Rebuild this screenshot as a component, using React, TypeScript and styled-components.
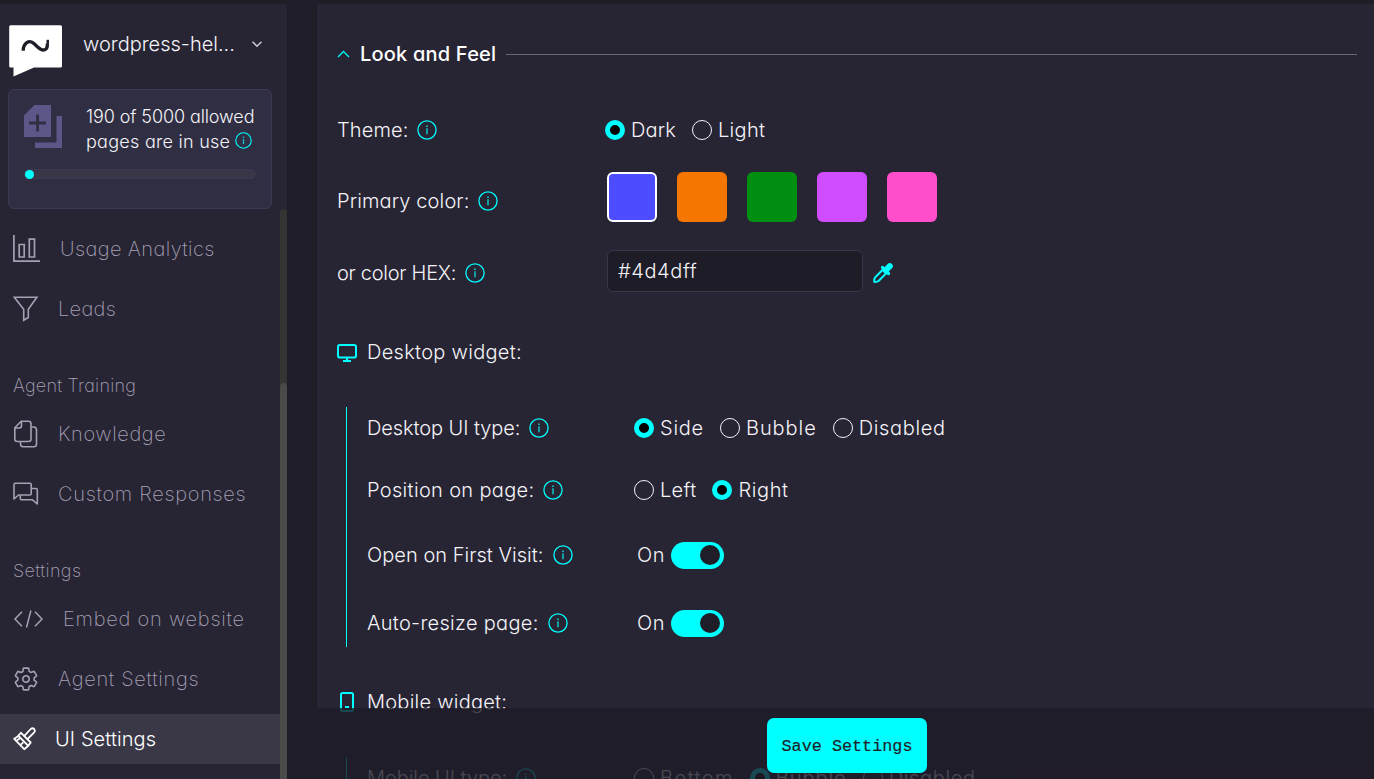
import {useState} from 'react'
import styled, {createGlobalStyle} from 'styled-components'
import {IoSettingsOutline} from 'react-icons/io5'

const colors = {
  page: '#1f1d27',
  panel: '#272433',
  accent: '#00ffff',
  muted: '#a5a0b5',
}

const swatches = ['#4d4dff', '#f57600', '#008f11', '#d04dff', '#ff4dcb']

export default function App() {
  const [color, setColor] = useState('#4d4dff')

  return (
    <>
      <GlobalStyle/>
      <Page>
        <Sidebar>
          <Account>
            <Logo/>
            <AccountName>wordpress-hel...</AccountName>
            <ChevronDown/>
          </Account>
          <UsageCard>
            <UsageTop>
              <PagesIcon/>
              <UsageText>
                <UsageLine $ls={-.1}>190 of 5000 allowed</UsageLine>
                <UsageLine $ls={.27}>pages are in use <Info size={17}/></UsageLine>
              </UsageText>
            </UsageTop>
            <Progress><ProgressFill/></Progress>
          </UsageCard>
          <NavScroll>
            <Nav>
              <NavItem $gap={19} $ls={.4}><ChartIcon/>Usage Analytics</NavItem>
              <NavItem $gap={19} $ls={.3}><FilterIcon/>Leads</NavItem>
              <NavTitle $ls={.25}>Agent Training</NavTitle>
              <NavItem $gap={19} $ls={.6}><FilesIcon/>Knowledge</NavItem>
              <NavItem $gap={19} $ls={.7}><ChatsIcon/>Custom Responses</NavItem>
              <NavTitle $ls={.4}>Settings</NavTitle>
              <NavItem $gap={19} $ls={.76}><CodeIcon/>Embed on website</NavItem>
              <NavItem $gap={19} $ls={.7}><IoSettingsOutline size={26}/>Agent Settings</NavItem>
              <NavItem $gap={18} $ls={.1} $active><BrushIcon/>UI Settings</NavItem>
            </Nav>
            <ScrollTrack><ScrollThumb/></ScrollTrack>
          </NavScroll>
        </Sidebar>

        <Main>
          <SectionHead>
            <ChevronUp/>
            <h2>Look and Feel</h2>
            <Rule/>
          </SectionHead>

          <Row $h={50} $mb={17}>
            <Label $ls={.1}>Theme: <Info/></Label>
            <Radios $shift={-2}>
              <Radio on ls={.15}>Dark</Radio>
              <Radio ls={.3}>Light</Radio>
            </Radios>
          </Row>
          <Row $h={50} $mb={28}>
            <Label $ls={.12} $drop={4}>Primary color: <Info/></Label>
            <Swatches>
              {swatches.map((s) => (
                <Swatch key={s} $color={s} $selected={s === color} onClick={() => setColor(s)}/>
              ))}
            </Swatches>
          </Row>
          <Row $h={42} $mb={45}>
            <Label $ls={-.27} $drop={2}>or color HEX: <Info/></Label>
            <HexInput value={color} onChange={(e) => setColor(e.target.value)}/>
            <Eyedropper/>
          </Row>

          <WidgetTitle $ls={.3}><DesktopIcon/>Desktop widget:</WidgetTitle>
          <Group>
            <Row $h={42} $mb={20}>
              <Label $ls={-.08}>Desktop UI type: <Info/></Label>
              <Radios $shift={-3}>
                <Radio on ls={.75}>Side</Radio>
                <Radio ls={.95}>Bubble</Radio>
                <Radio ls={.65}>Disabled</Radio>
              </Radios>
            </Row>
            <Row $h={42} $mb={23}>
              <Label $ls={.33}>Position on page: <Info/></Label>
              <Radios $shift={-3}>
                <Radio ls={.3}>Left</Radio>
                <Radio on ls={.6}>Right</Radio>
              </Radios>
            </Row>
            <Row $h={42} $mb={26}>
              <Label $ls={.04}>Open on First Visit: <Info/></Label>
              <Toggle/>
            </Row>
            <Row $h={42} $mb={3}>
              <Label $ls={.3}>Auto-resize page: <Info/></Label>
              <Toggle/>
            </Row>
          </Group>

          <WidgetTitle $ls={.25}><MobileIcon/>Mobile widget:</WidgetTitle>
          <Group>
            <Row $h={42} $mb={20}>
              <Label $ls={-.05}>Mobile UI type: <Info/></Label>
              <Radios $shift={-3}>
                <Radio ls={1.4}>Bottom</Radio>
                <Radio on ls={.95}>Bubble</Radio>
                <Radio ls={.65}>Disabled</Radio>
              </Radios>
            </Row>
          </Group>

          <Footer>
            <SaveButton>Save Settings</SaveButton>
          </Footer>
        </Main>
      </Page>
    </>
  )
}

function Radio({children, on = false, ls}: {children: string, on?: boolean, ls: number}) {
  return <RadioLabel $ls={ls}><RadioDot $on={on}/>{children}</RadioLabel>
}

function Toggle() {
  return <ToggleWrap>On<Switch><Knob/></Switch></ToggleWrap>
}

function Info({size = 20}: {size?: number}) {
  return (
    <InfoSvg width={size} height={size} viewBox='0 0 20 20' fill='none' stroke={colors.accent}>
      <circle cx='10' cy='10' r='9.1' strokeWidth='1.3'/>
      <path d='M10 8.2V14.3' strokeWidth='1.5' opacity='.75'/>
      <path d='M10 5.4V6.9' strokeWidth='1.7' opacity='.75'/>
    </InfoSvg>
  )
}

function Logo() {
  return (
    <svg width='54' height='53' viewBox='0 0 54 53'>
      <path d='M1.500 .3H51.500Q53 .3 53 1.800V41Q53 42.500 51.500 42.500H25L4.500 51.500V42.500H1.500Q.2 42.500 .2 41V1.800Q.2 .3 1.500 .3Z' fill='#fff'/>
      <path d='M14.200 25.800C14.200 18.500 20 13.500 25.500 19C31 24.500 34 26.500 37 24C38.500 22.800 38.400 21 38.400 18.200' fill='none' stroke='#1f1d27' strokeWidth='3.300'/>
      <path d='M37.500 14.800H40V18.500H37.500Z' fill='#1f1d27'/>
    </svg>
  )
}

function ChevronDown() {
  return (
    <svg width='12' height='8' viewBox='0 0 12 8' fill='none' stroke='#c9c6d2' strokeWidth='1.6'>
      <path d='M1.500 1.700L6 6.200L10.500 1.700'/>
    </svg>
  )
}

function ChevronUp() {
  return (
    <svg width='13' height='8' viewBox='0 0 13 8' fill='none' stroke={colors.accent} strokeWidth='1.3'>
      <path d='M1 7L6.500 1.500L12 7'/>
    </svg>
  )
}

function PagesIcon() {
  return (
    <svg width='38' height='43' viewBox='0 0 38 43' fill='#5c5788'>
      <path fillRule='evenodd' d='M10.500 0H27V32H0V10.500ZM12.200 9.500V16.600H5V19.400H12.200V26.500H15V19.400H22V16.600H15V9.500Z'/>
      <path d='M32.500 11H38V43H11V37.500H32.500Z'/>
    </svg>
  )
}

function ChartIcon() {
  return (
    <svg width='28' height='30' viewBox='0 0 28 30' fill='none' stroke='currentColor' strokeWidth='1.7'>
      <path d='M.9 1V27.200H27M6.200 10.500H11.200V23H6.200ZM16.300 5.200H21.500V23H16.300Z'/>
    </svg>
  )
}

function FilterIcon() {
  return (
    <svg width='26' height='26' viewBox='0 0 26 26' fill='none' stroke='currentColor' strokeWidth='1.6'>
      <path d='M1.300 1.300H23.900L15.300 13.300V21.500L10.700 24.300V13.300Z'/>
    </svg>
  )
}

function FilesIcon() {
  return (
    <svg width='26' height='28' viewBox='0 0 26 28' fill='none' stroke='currentColor' strokeWidth='1.6' strokeLinejoin='round'>
      <path d='M8.200 1.300H15.500Q18 1.300 18 3.800V19Q18 21.500 15.500 21.500H4.300Q1.800 21.500 1.800 19V7.700ZM8.500 1.500V5.800Q8.500 8 6.300 8H2'/>
      <path d='M18.200 7H20.700Q23.500 7 23.500 9.800V24Q23.500 26.800 20.700 26.800H10.300Q7.500 26.800 7.500 24V21.800'/>
    </svg>
  )
}

function ChatsIcon() {
  return (
    <svg width='26' height='24' viewBox='0 0 26 24' fill='none' stroke='currentColor' strokeWidth='1.6' strokeLinejoin='round'>
      <path d='M1 17V2.500Q1 1.300 2.200 1.300H17Q18.200 1.300 18.200 2.500V11.800Q18.200 13 17 13H5.500Z'/>
      <path d='M18.500 6.500H23Q24.300 6.500 24.300 7.800V22L19.500 17.800H8.500Q7.300 17.800 7.300 16.600V13.500'/>
    </svg>
  )
}

function CodeIcon() {
  return (
    <svg width='31' height='18' viewBox='0 0 31 18' fill='none' stroke='currentColor' strokeWidth='1.5'>
      <path d='M9 1.800L2 9L9 16.200M17.900 .5L13.500 17.500M22 1.800L29 9L22 16.200'/>
    </svg>
  )
}

function BrushIcon() {
  return (
    <svg width='24' height='26' viewBox='0 0 24 26' fill='none' stroke='currentColor' strokeWidth='1.8' strokeLinejoin='round'>
      <path d='M8 6.800L17.700 16.500Q15.500 20.300 11.200 23.200L1.200 12.900Q5 10.800 8 6.800Z'/>
      <path d='M5.500 10L14.800 19.400M3.700 14.500L6.700 12.500M7.800 18.600L10.300 16.300'/>
      <path d='M11.300 9.800L17.800 3Q19.500 1.600 21.200 3Q22.600 4.700 21.200 6.400L14.600 13'/>
    </svg>
  )
}

function Eyedropper() {
  return (
    <EyedropperSvg width='20' height='20' viewBox='0 0 20 20' fill='none' stroke={colors.accent} strokeLinecap='round' strokeLinejoin='round'>
      <path d='M10.200 6.300L2.300 14.200Q.8 16 1.200 18.800Q4 19.200 5.800 17.700L13.700 9.800' strokeWidth='2'/>
      <path d='M9.500 4.500L15.500 10.500' strokeWidth='3.200'/>
      <path d='M12.700 7.300L16.800 3.200' strokeWidth='6'/>
    </EyedropperSvg>
  )
}

function DesktopIcon() {
  return (
    <DesktopSvg width='20' height='18' viewBox='0 0 20 18' fill='none' stroke={colors.accent} strokeWidth='2'>
      <rect x='1' y='1' width='18' height='12.600' rx='1.800'/>
      <path d='M10 13.500V16.500M6 17H14'/>
    </DesktopSvg>
  )
}

function MobileIcon() {
  return (
    <MobileSvg width='14' height='20' viewBox='0 0 14 20' fill='none' stroke={colors.accent} strokeWidth='2'>
      <rect x='1' y='1' width='12' height='18' rx='1.800'/>
      <path d='M5 15H9'/>
    </MobileSvg>
  )
}

const GlobalStyle = createGlobalStyle`
  *{
    box-sizing: border-box;
  }
  body{
    margin: 0;
    background: ${colors.page};
    color: #f4f3f8;
    font-family: Inter, sans-serif;
    font-size: 20px;
    font-weight: 290;
    font-feature-settings: "cv11";
  }
  svg{
    flex: none;
  }
`

const Page = styled.div`
  display: flex;
  gap: 30px;
  height: 779px;
  padding-top: 4px;
  overflow: hidden;
`

const Sidebar = styled.aside`
  display: flex;
  flex-direction: column;
  flex: none;
  width: 287px;
  background: ${colors.panel};
`

const Account = styled.div`
  display: flex;
  flex: none;
  height: 85px;
  padding: 21px 0 0 9px;

  svg:last-child{
    margin: 15px 0 0 15px;
  }
`

const AccountName = styled.div`
  width: 153px;
  margin: 5px 0 0 20px;
  line-height: 28px;
  white-space: nowrap;
`

const UsageCard = styled.div`
  flex: none;
  width: 264px;
  height: 120px;
  margin-left: 8px;
  padding: 15px;
  background: #302e42;
  border: 1px solid #3c3954;
  border-radius: 6px;
`

const UsageTop = styled.div`
  display: flex;
  gap: 24px;
`

const UsageText = styled.div`
  margin-top: -1px;
  white-space: nowrap;
`

const UsageLine = styled.div<{$ls: number}>`
  height: 25px;
  font-size: 18px;
  line-height: 25px;
  letter-spacing: ${p => p.$ls}px;

  svg{
    margin-left: -1px;
    vertical-align: -1px;
  }
`

const Progress = styled.div`
  height: 10px;
  margin: 15px 0 0;
  background: #393747;
  border: 1px solid #3c3954;
  border-radius: 5px;
`

const ProgressFill = styled.div`
  width: 9px;
  height: 9px;
  margin-top: -.5px;
  background: ${colors.accent};
  border-radius: 50%;
`

const NavScroll = styled.div`
  display: flex;
  flex: 1;
`

const Nav = styled.nav`
  width: 280px;
  padding-top: 15px;
`

const NavItem = styled.div<{$gap: number, $ls: number, $active?: boolean}>`
  display: flex;
  align-items: center;
  gap: ${p => p.$gap}px;
  height: 50px;
  margin-bottom: 10px;
  padding-left: 13px;
  color: ${p => p.$active ? '#fff' : colors.muted};
  background: ${p => p.$active ? '#3a3847' : 'transparent'};
  font-weight: ${p => p.$active ? 300 : 210};
  letter-spacing: ${p => p.$ls}px;
`

const NavTitle = styled.div<{$ls: number}>`
  height: 50px;
  margin-top: 25px;
  padding-left: 13px;
  color: ${colors.muted};
  font-size: 18px;
  font-weight: 210;
  line-height: 54px;
  letter-spacing: ${p => p.$ls}px;
`

const ScrollTrack = styled.div`
  width: 7px;
  padding-top: 174px;
  background: #343434;
  border-radius: 4px 4px 0 0;
`

const ScrollThumb = styled.div`
  height: 396px;
  background: #4a4a4a;
  border-radius: 4px 4px 0 0;
`

const Main = styled.main`
  position: relative;
  flex: 1;
  padding: 30px 17px 0 20px;
  background: ${colors.panel};
`

const SectionHead = styled.div`
  display: flex;
  align-items: center;
  gap: 10px;
  height: 40px;
  margin-bottom: 31px;

  h2{
    margin: 0;
    color: #fff;
    font-size: 20px;
    font-weight: 500;
    letter-spacing: .2px;
  }
`

const Rule = styled.div`
  flex: 1;
  height: 1px;
  background: #6a6678;
`

const Row = styled.div<{$h: number, $mb: number}>`
  display: flex;
  align-items: center;
  height: ${p => p.$h}px;
  margin-bottom: ${p => p.$mb}px;
`

const Label = styled.div<{$ls: number, $drop?: number}>`
  display: flex;
  align-items: center;
  gap: 9px;
  width: 270px;
  padding-top: ${p => (p.$drop || 0) * 2}px;
  letter-spacing: ${p => p.$ls}px;
  white-space: nowrap;
`

const InfoSvg = styled.svg`
  overflow: visible;
`

const Radios = styled.div<{$shift: number}>`
  display: flex;
  gap: 16px;
  margin-left: ${p => p.$shift}px;
`

const RadioLabel = styled.label<{$ls: number}>`
  display: flex;
  align-items: center;
  gap: 6px;
  letter-spacing: ${p => p.$ls}px;
`

const RadioDot = styled.span<{$on: boolean}>`
  width: 20px;
  height: 20px;
  background: ${p => p.$on ? '#000' : 'transparent'};
  border: ${p => p.$on ? `5px solid ${colors.accent}` : '1px solid #f4f3f8'};
  border-radius: 50%;
`

const Swatches = styled.div`
  display: flex;
  gap: 20px;
`

const Swatch = styled.button<{$color: string, $selected: boolean}>`
  width: 50px;
  height: 50px;
  padding: 0;
  background: ${p => p.$color};
  border: ${p => p.$selected ? '2px solid #fff' : 'none'};
  border-radius: 6px;
`

const HexInput = styled.input`
  width: 256px;
  height: 42px;
  margin-right: 10px;
  padding: 0 10px;
  color: #f4f3f8;
  background: #1e1c27;
  border: 1px solid #393649;
  border-radius: 6px;
  font: inherit;
  font-feature-settings: inherit;
  letter-spacing: .6px;
`

const EyedropperSvg = styled.svg`
  margin-top: 4px;
  overflow: visible;
`

const WidgetTitle = styled.div<{$ls: number}>`
  display: flex;
  align-items: center;
  gap: 10px;
  height: 30px;
  letter-spacing: ${p => p.$ls}px;
`

const DesktopSvg = styled.svg`
  margin-top: 2px;
`

const MobileSvg = styled.svg`
  margin: 0 3px;
`

const Group = styled.div`
  height: 240px;
  margin: 40px 0 40px 9px;
  padding-left: 20px;
  border-left: 1px solid ${colors.accent};
`

const ToggleWrap = styled.div`
  display: flex;
  align-items: center;
  gap: 6px;
  letter-spacing: .5px;
`

const Switch = styled.div`
  display: flex;
  align-items: center;
  justify-content: flex-end;
  width: 53px;
  height: 27px;
  padding-right: 4px;
  background: ${colors.accent};
  border-radius: 14px;
`

const Knob = styled.div`
  width: 20px;
  height: 20px;
  background: #1f1d27;
  border-radius: 50%;
`

const Footer = styled.div`
  position: absolute;
  right: 0;
  bottom: 0;
  left: 0;
  display: flex;
  justify-content: center;
  height: 71px;
  padding: 10px 0 0 3px;
  background: rgba(30, 27, 39, .8);
`

const SaveButton = styled.button`
  width: 160px;
  height: 55px;
  padding: 2px 0 0;
  color: #1f1d27;
  background: #0ff;
  border: none;
  border-radius: 7px;
  font-family: 'Liberation Mono', monospace;
  font-size: 16.8px;
  -webkit-text-stroke: .15px #1f1d27;
`
